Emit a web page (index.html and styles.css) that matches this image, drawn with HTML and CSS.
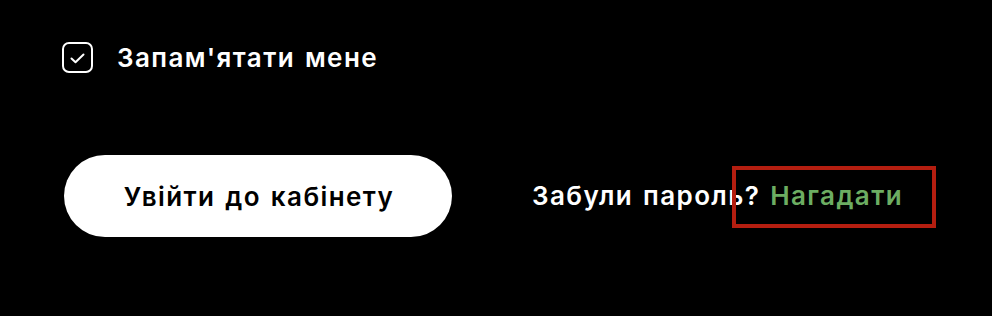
FILE: index.html
```html
<!DOCTYPE html>
<html lang="uk">
<head>
<meta charset="utf-8">
<link rel="stylesheet" href="styles.css">
</head>
<body>
<form class="login">
  <label class="remember">
    <span class="checkbox">
      <svg width="15" height="11" viewBox="0 0 15 11"><path d="M1.5 5.5 L5.5 9.2 L13.5 1.5" fill="none" stroke="#fff" stroke-width="2" stroke-linecap="round" stroke-linejoin="round"/></svg>
    </span>
    <span class="remember-text">Запам'ятати мене</span>
  </label>
  <div class="actions">
    <button type="button" class="submit">Увійти до кабінету</button>
    <p class="forgot">Забули пароль? <a class="remind" href="#">Нагадати<span class="highlight"></span></a></p>
  </div>
</form>
</body>
</html>
```

FILE: styles.css
```css
html, body {
  margin: 0;
  padding: 0;
  background: #000;
}
body {
  font-family: "Inter", "Noto Sans", sans-serif;
  color: #fff;
  width: 992px;
  height: 316px;
  overflow: hidden;
}
.login {
  padding: 42px 0 0 62px;
  display: flex;
  flex-direction: column;
}
.remember {
  display: flex;
  align-items: center;
  gap: 24px;
  height: 31px;
}
.checkbox {
  box-sizing: border-box;
  width: 31px;
  height: 31px;
  border: 2px solid #fff;
  border-radius: 7px;
  display: flex;
  align-items: center;
  justify-content: center;
}
.checkbox svg {
  margin-top: 1px;
}
.remember-text,
.submit,
.forgot {
  font-size: 26px;
  font-weight: 600;
  letter-spacing: 1.4px;
  word-spacing: 2px;
}
.remember-text {
  line-height: 31px;
}
.actions {
  display: flex;
  align-items: center;
  margin-top: 82px;
  margin-left: 2px;
}
.submit {
  box-sizing: border-box;
  width: 388px;
  height: 82px;
  border: 0;
  border-radius: 41px;
  background: #fff;
  color: #000;
  font-family: inherit;
  padding: 0 0 0 2px;
  cursor: pointer;
}
.forgot {
  margin: 0 0 0 80px;
  line-height: 30px;
}
.remind {
  position: relative;
  color: #6cad62;
  text-decoration: none;
}
.highlight {
  position: absolute;
  left: -38px;
  top: -14px;
  width: 204px;
  height: 62px;
  box-sizing: border-box;
  border: 4px solid #b41e10;
}
```
